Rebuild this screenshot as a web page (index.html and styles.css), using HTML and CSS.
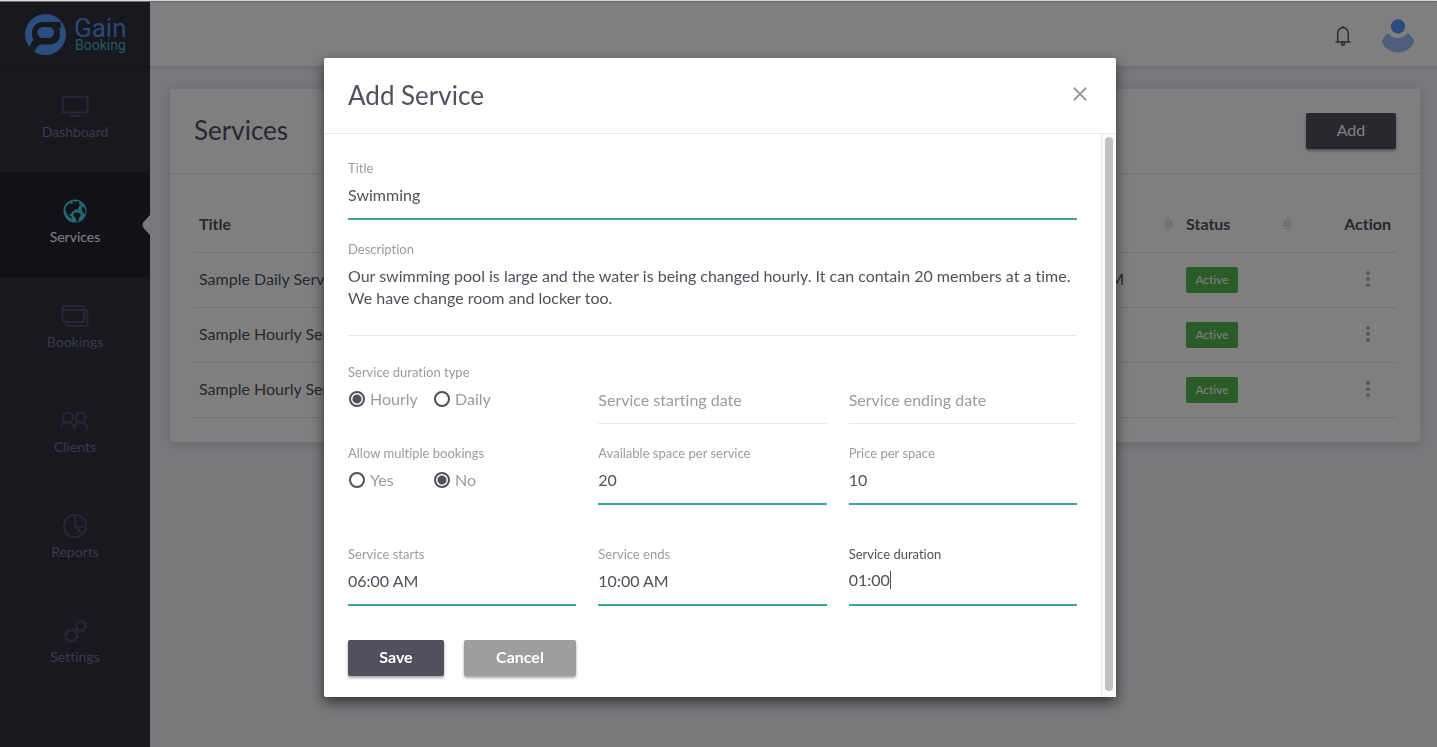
FILE: index.html
```html
<!DOCTYPE html>
<html lang="en">
<head>
<meta charset="utf-8">
<title>Gain Booking - Services</title>
<link rel="stylesheet" href="styles.css">
</head>
<body>
<div class="app">
  <aside class="sidebar">
    <a class="brand" href="#" aria-label="Gain Booking">
      <svg class="brand-mark" viewBox="0 0 42 42" aria-hidden="true">
        <circle cx="20.500" cy="20.500" r="20.500" fill="#559dff"/>
        <path d="M35.500 8H18C10.500 8 7 13 7 19c0 3 .6 5 1.500 7C7 27.500 5.500 30 4.500 33L1 35l7 5 2.500-4.500c.8-3 3.500-5 7.500-5h7c7 0 10-5 10-10.500 0-2.500-.2-4.500-.8-6h2z" fill="#31313f"/>
        <rect x="12.500" y="13" width="16.500" height="11" rx="5.500" fill="#559dff"/>
      </svg>
      <span class="brand-text"><span class="brand-gain">Gain</span><span class="brand-booking">Booking</span></span>
    </a>
    <nav class="nav">
      <a class="nav-item" href="#">
        <svg viewBox="0 0 28 24"><path d="M1.800 2.800h24.800v15.800H1.800zM14 19v2.500M8.500 22h11"/></svg>
        <span>Dashboard</span>
      </a>
      <a class="nav-item active" href="#" aria-current="page">
        <svg viewBox="0 0 28 24"><circle class="globe" cx="14" cy="12" r="11.500"/><path class="land" d="M4.300 10.500c.5-3 2.500-5.500 5-6.700l1 1.700 1.500-.8L11.500 2h1.500l1 1.500L16 2l2.500 1-.5 2 1.500 1-2 2-.5 2.500-2.500-.5-1 1.800-2 .4-1.500 2.800-2-.2 1 2.200 2 .8-.5 1.500-2.500-1.200-2-3zM12.500 14.500l2.500-1.300 4.500 1.300v2.500l-1.500 1.700-.5 3.300-2 .8-1-4-2-2zM21.500 7.500l2.500 2 .7 4-1.500 1.500-1.700-2.500-1-2.500z"/></svg>
        <span>Services</span>
        <svg class="notch" viewBox="0 0 8 20"><path d="M8 0v20L2 13.500Q-1 10 2 6.500z"/></svg>
      </a>
      <a class="nav-item" href="#">
        <svg viewBox="0 0 28 24"><rect x="1.500" y="2" width="21.500" height="16" rx="2"/><path d="M2 6h21M5.500 18.500v1.200a2 2 0 0 0 2 2h17a2 2 0 0 0 2-2V8a2 2 0 0 0-2-2h-1.500M23 10h3.500"/></svg>
        <span>Bookings</span>
      </a>
      <a class="nav-item" href="#">
        <svg viewBox="0 0 28 24"><circle cx="6.800" cy="8.500" r="5"/><circle cx="19.800" cy="8.500" r="5"/><path d="M0 20c.2-3.800 2.500-6.500 6.700-6.500s6.300 3 6.500 6.500c.2-3.500 2.300-6.500 6.500-6.500s6.500 2.700 6.900 6.500"/></svg>
        <span>Clients</span>
      </a>
      <a class="nav-item" href="#">
        <svg viewBox="0 0 28 24"><circle cx="14" cy="12" r="11.300"/><path d="M14 .7V12.500h11.300M14 12.500l8 7.500"/></svg>
        <span>Reports</span>
      </a>
      <a class="nav-item" href="#">
        <svg viewBox="0 0 28 24"><circle cx="10.500" cy="16.500" r="5.300"/><circle class="teeth" cx="10.500" cy="16.500" r="6.800" pathLength="32"/><circle cx="20" cy="7" r="4.300"/><circle class="teeth" cx="20" cy="7" r="5.700" pathLength="32"/></svg>
        <span>Settings</span>
      </a>
    </nav>
  </aside>

  <div class="main">
    <header class="topbar">
      <button class="icon-button" type="button" aria-label="Notifications">
        <svg class="bell" viewBox="0 0 18 22"><path d="M3.700 17V8.500a5.300 6 0 0 1 10.600 0V17M1.500 17h15M9 1v2"/><circle cx="9" cy="18.800" r="1.500"/></svg>
      </button>
      <button class="icon-button" type="button" aria-label="Account">
        <svg class="avatar" viewBox="0 0 34 34"><path d="M7.500 14C4 16 2 19 .8 22.500 4 30 10 33.500 17 33.500s13-3.500 16.200-11C32 19 30 16 26.500 14c-2 3.200-5.500 5-9.500 5s-7.500-1.800-9.500-5z" fill="#9cbcf6"/><circle cx="17" cy="7.500" r="7.200" fill="#5697ff"/></svg>
      </button>
    </header>

    <main class="card">
      <div class="card-head">
        <h1 class="heading">Services</h1>
        <button class="btn btn-add" type="button">Add</button>
      </div>
      <div class="card-body">
        <table class="services">
          <colgroup><col><col><col class="col-status"><col class="col-action"></colgroup>
          <thead>
            <tr>
              <th scope="col">Title</th>
              <th scope="col"><div class="th-sort end"><svg class="sort" viewBox="0 0 9 12"><path d="M.8 5 4.500.8 8.200 5zM.8 7.200h7.400L4.500 11.300z"/></svg></div></th>
              <th scope="col"><div class="th-sort">Status<svg class="sort" viewBox="0 0 9 12"><path d="M.8 5 4.500.8 8.200 5zM.8 7.200h7.400L4.500 11.300z"/></svg></div></th>
              <th scope="col" class="right">Action</th>
            </tr>
          </thead>
          <tbody>
            <tr>
              <td>Sample Daily Service</td>
              <td class="time">PM</td>
              <td><span class="badge">Active</span></td>
              <td class="right"><button class="more" type="button" aria-label="Actions"><svg viewBox="0 0 4 16"><circle cx="2" cy="2" r="2"/><circle cx="2" cy="8" r="2"/><circle cx="2" cy="14" r="2"/></svg></button></td>
            </tr>
            <tr>
              <td>Sample Hourly Service</td>
              <td class="time"><a href="#">All</a></td>
              <td><span class="badge">Active</span></td>
              <td class="right"><button class="more" type="button" aria-label="Actions"><svg viewBox="0 0 4 16"><circle cx="2" cy="2" r="2"/><circle cx="2" cy="8" r="2"/><circle cx="2" cy="14" r="2"/></svg></button></td>
            </tr>
            <tr>
              <td>Sample Hourly Service</td>
              <td class="time"></td>
              <td><span class="badge">Active</span></td>
              <td class="right"><button class="more" type="button" aria-label="Actions"><svg viewBox="0 0 4 16"><circle cx="2" cy="2" r="2"/><circle cx="2" cy="8" r="2"/><circle cx="2" cy="14" r="2"/></svg></button></td>
            </tr>
          </tbody>
        </table>
      </div>
    </main>
  </div>
</div>

<div class="overlay">
  <section class="modal" role="dialog" aria-modal="true" aria-labelledby="modal-title">
    <header class="modal-head">
      <h2 class="heading" id="modal-title">Add Service</h2>
      <button class="close" type="button" aria-label="Close"><svg viewBox="0 0 14 14"><path d="M.8.8l12.400 12.400M13.200.8.8 13.200"/></svg></button>
    </header>
    <div class="modal-content">
      <form class="form">
        <div class="field">
          <label for="title">Title</label>
          <input class="control filled" id="title" type="text" value="Swimming">
        </div>
        <div class="field">
          <label for="description">Description</label>
          <textarea class="control area" id="description">Our swimming pool is large and the water is being changed hourly. It can contain 20 members at a time. We have change room and locker too.</textarea>
        </div>
        <div class="row row-dates">
          <fieldset class="field choice">
            <legend>Service duration type</legend>
            <div class="options">
              <label><input type="radio" name="type" checked>Hourly</label>
              <label><input type="radio" name="type">Daily</label>
            </div>
          </fieldset>
          <div class="field unlabelled"><input class="control" type="text" placeholder="Service starting date" aria-label="Service starting date"></div>
          <div class="field unlabelled"><input class="control" type="text" placeholder="Service ending date" aria-label="Service ending date"></div>
        </div>
        <div class="row">
          <fieldset class="field choice">
            <legend>Allow multiple bookings</legend>
            <div class="options">
              <label><input type="radio" name="multiple">Yes</label>
              <label><input type="radio" name="multiple" checked>No</label>
            </div>
          </fieldset>
          <div class="field"><label for="space">Available space per service</label><input class="control filled" id="space" type="text" value="20"></div>
          <div class="field"><label for="price">Price per space</label><input class="control filled" id="price" type="text" value="10"></div>
        </div>
        <div class="row row-times">
          <div class="field"><label for="starts">Service starts</label><input class="control filled" id="starts" type="text" value="06:00 AM"></div>
          <div class="field"><label for="ends">Service ends</label><input class="control filled" id="ends" type="text" value="10:00 AM"></div>
          <div class="field focused"><label for="duration">Service duration</label>
            <div class="control filled editing"><input id="duration" type="text" value="01:00"><span class="caret"></span></div>
          </div>
        </div>
        <div class="actions">
          <button class="btn btn-save" type="button">Save</button>
          <button class="btn btn-cancel" type="button">Cancel</button>
        </div>
      </form>
      <div class="scroll-track"><div class="scroll-thumb"></div></div>
    </div>
  </section>
</div>
</body>
</html>
```
FILE: styles.css
```css
* { box-sizing: border-box; }

body {
  margin: 0;
  color: #50505f;
  background: #eff2f7;
  font-family: Lato, "Open Sans", sans-serif;
  font-size: 16px;
  font-variant-ligatures: none;
  line-height: 22px;
}

button, input, textarea { font: inherit; color: inherit; }
button { cursor: pointer; }
svg { display: block; }

.app {
  display: flex;
  min-height: 100vh;
  border-top: 2px solid #dcdcdc;
}

.sidebar {
  width: 150px;
  flex: none;
  background: #31313f;
}

.brand {
  display: flex;
  gap: 7px;
  height: 65px;
  padding: 12px 0 0 25px;
  border-bottom: 1px solid #282834;
  text-decoration: none;
}
.brand-mark { width: 42px; height: 42px; }
.brand-text {
  display: flex;
  flex-direction: column;
  font-family: Roboto, sans-serif;
}
.brand-gain { color: #558fee; font-size: 26px; line-height: 28px; }
.brand-booking { color: #42b4bc; font-size: 14px; line-height: 7px; padding-left: 1px; }

.nav-item {
  position: relative;
  display: flex;
  flex-direction: column;
  align-items: center;
  gap: 3px;
  height: 105px;
  padding-top: 27px;
  color: #747490;
  font-size: 14px;
  text-decoration: none;
}
.nav-item svg {
  width: 28px;
  height: 24px;
  fill: none;
  stroke: #4e4e68;
  stroke-width: 2;
}
.nav-item .teeth { stroke-width: 2; stroke-dasharray: 2 2; }
.nav-item.active { background: #232330; color: #fff; }
.nav-item .globe { fill: #46cfe0; stroke: none; }
.nav-item .land { fill: #232330; stroke: none; }
.nav-item .notch {
  position: absolute;
  right: 0;
  top: 43px;
  width: 8px;
  height: 20px;
  fill: #eff2f7;
  stroke: none;
}

.main { flex: 1; min-width: 0; }

.topbar {
  display: flex;
  align-items: center;
  justify-content: flex-end;
  gap: 29px;
  height: 64px;
  padding: 4px 22px 0 0;
  background: #fff;
  box-shadow: 0 1px 6px rgba(0, 0, 0, .14);
}
.icon-button { padding: 0; border: 0; background: none; }
.bell { width: 18px; height: 22px; fill: none; stroke: #50505f; stroke-width: 1.4; }
.avatar { width: 34px; height: 34px; }

.card {
  margin: 23px 17px 20px 20px;
  background: #fff;
  border-radius: 2px;
  box-shadow: 0 1px 14px rgba(0, 0, 0, .14);
}
.card-head {
  display: flex;
  align-items: center;
  justify-content: space-between;
  height: 85px;
  padding: 0 24px;
  border-bottom: 1px solid #e4e4ea;
}
.heading { margin: 0; padding-bottom: 2px; font-size: 26px; line-height: 32px; font-weight: 400; }
.card-body { padding: 23px 24px 24px; }

.btn {
  height: 36px;
  padding: 0 24px 2px;
  border: 0;
  border-radius: 2px;
  color: #fff;
  font-weight: 700;
  box-shadow: 0 2px 3px rgba(0, 0, 0, .35);
}
.btn-add { min-width: 90px; background: #50505f; font-weight: 400; }
.btn-save { min-width: 96px; background: #50505f; }
.btn-cancel { min-width: 112px; background: #9e9e9c; }

.services { width: 100%; border-collapse: collapse; table-layout: fixed; }
.col-status { width: 118px; }
.col-action { width: 97px; }
.services th, .services td {
  height: 55px;
  padding: 0 5px;
  border-bottom: 1px solid #e4e4ea;
  text-align: left;
}
.services td { padding-bottom: 2px; }
.services .right { text-align: right; }
.services .time { padding-right: 57px; text-align: right; }
.services .time a { padding-right: 7px; color: #5c9bd0; text-decoration: none; }
.th-sort { display: flex; align-items: center; justify-content: space-between; padding-right: 2px; }
.th-sort.end { justify-content: flex-end; padding-right: 3px; }
.sort { width: 9px; height: 12px; fill: none; stroke: #c8c8c8; }
.badge {
  display: block;
  width: 52px;
  margin-top: 2px;
  border-radius: 2px;
  background: #56b94e;
  color: #fff;
  font-size: 12px;
  line-height: 26px;
  text-align: center;
}
.more {
  display: flex;
  justify-content: center;
  width: 46px;
  margin-left: auto;
  padding: 0;
  border: 0;
  background: none;
}
.more svg { width: 4px; height: 16px; fill: #b0b0bc; }

.overlay {
  position: fixed;
  inset: 1px 0 0;
  display: flex;
  align-items: flex-start;
  justify-content: center;
  padding: 57px 0 24px 3px;
  overflow: auto;
  background: rgba(0, 0, 0, .5);
}
.modal {
  width: 100%;
  max-width: 792px;
  background: #fff;
  border-radius: 2px;
  box-shadow: 0 5px 14px rgba(0, 0, 0, .6);
}
.modal-head {
  display: flex;
  align-items: center;
  justify-content: space-between;
  height: 76px;
  padding: 0 29px 0 24px;
  border-bottom: 1px solid #e8e8e8;
}
.close { padding: 0 0 3px; border: 0; background: none; }
.close svg { width: 14px; height: 14px; fill: none; stroke: #9b9b9b; stroke-width: 2; }

.modal-content { display: flex; }
.form {
  display: flex;
  flex: 1;
  flex-direction: column;
  gap: 19px;
  min-width: 0;
  padding: 24px 24px 21px;
}
.row {
  display: grid;
  grid-template-columns: repeat(3, 1fr);
  gap: 22px;
}
.row-dates { padding-top: 7px; }
.row-times { padding-top: 20px; }

.field {
  display: flex;
  flex-direction: column;
  min-width: 0;
  margin: 0;
  padding: 0;
  border: 0;
  color: #9b9b9b;
}
.field > label, .field legend {
  padding: 0;
  font-size: 13px;
  line-height: 20px;
}
.field.unlabelled { padding-top: 20px; }
.field.focused { color: #50505f; }

.control {
  width: 100%;
  height: 42px;
  padding: 0 0 8px;
  border: 0;
  border-bottom: 1px solid #e8e8f0;
  border-radius: 0;
  outline: 0;
  background: none;
  color: #50505f;
}
.control::placeholder { color: #9b9b9b; opacity: 1; }
.control.filled { border-bottom: 2px solid #3da696; }
.control.area {
  display: block;
  height: 77px;
  padding-top: 6px;
  border-color: #e8e8e8;
  resize: none;
  overflow: hidden;
}
.unlabelled .control { padding-bottom: 6px; }
.editing { display: flex; align-items: center; }
.editing input {
  field-sizing: content;
  padding: 0;
  border: 0;
  outline: 0;
  background: none;
}
.caret { width: 1px; height: 18px; background: #50505f; }

.options {
  display: grid;
  grid-template-columns: 85px 85px;
  padding-top: 6px;
}
.options label { display: flex; align-items: center; gap: 5px; }
.options input {
  flex: none;
  width: 16px;
  height: 16px;
  margin: 0 0 0 1px;
  appearance: none;
  border: 2px solid #50505f;
  border-radius: 50%;
}
.options input:checked {
  background: radial-gradient(circle, #50505f 4px, transparent 5px);
}

.actions { display: flex; gap: 20px; padding-top: 15px; }

.scroll-track {
  display: flex;
  width: 15px;
  padding: 3px 3px 6px;
  border-left: 1px solid #e8e8e8;
  background: #fafafa;
}
.scroll-thumb { flex: 1; border-radius: 4px; background: #c1c1c1; }
```
